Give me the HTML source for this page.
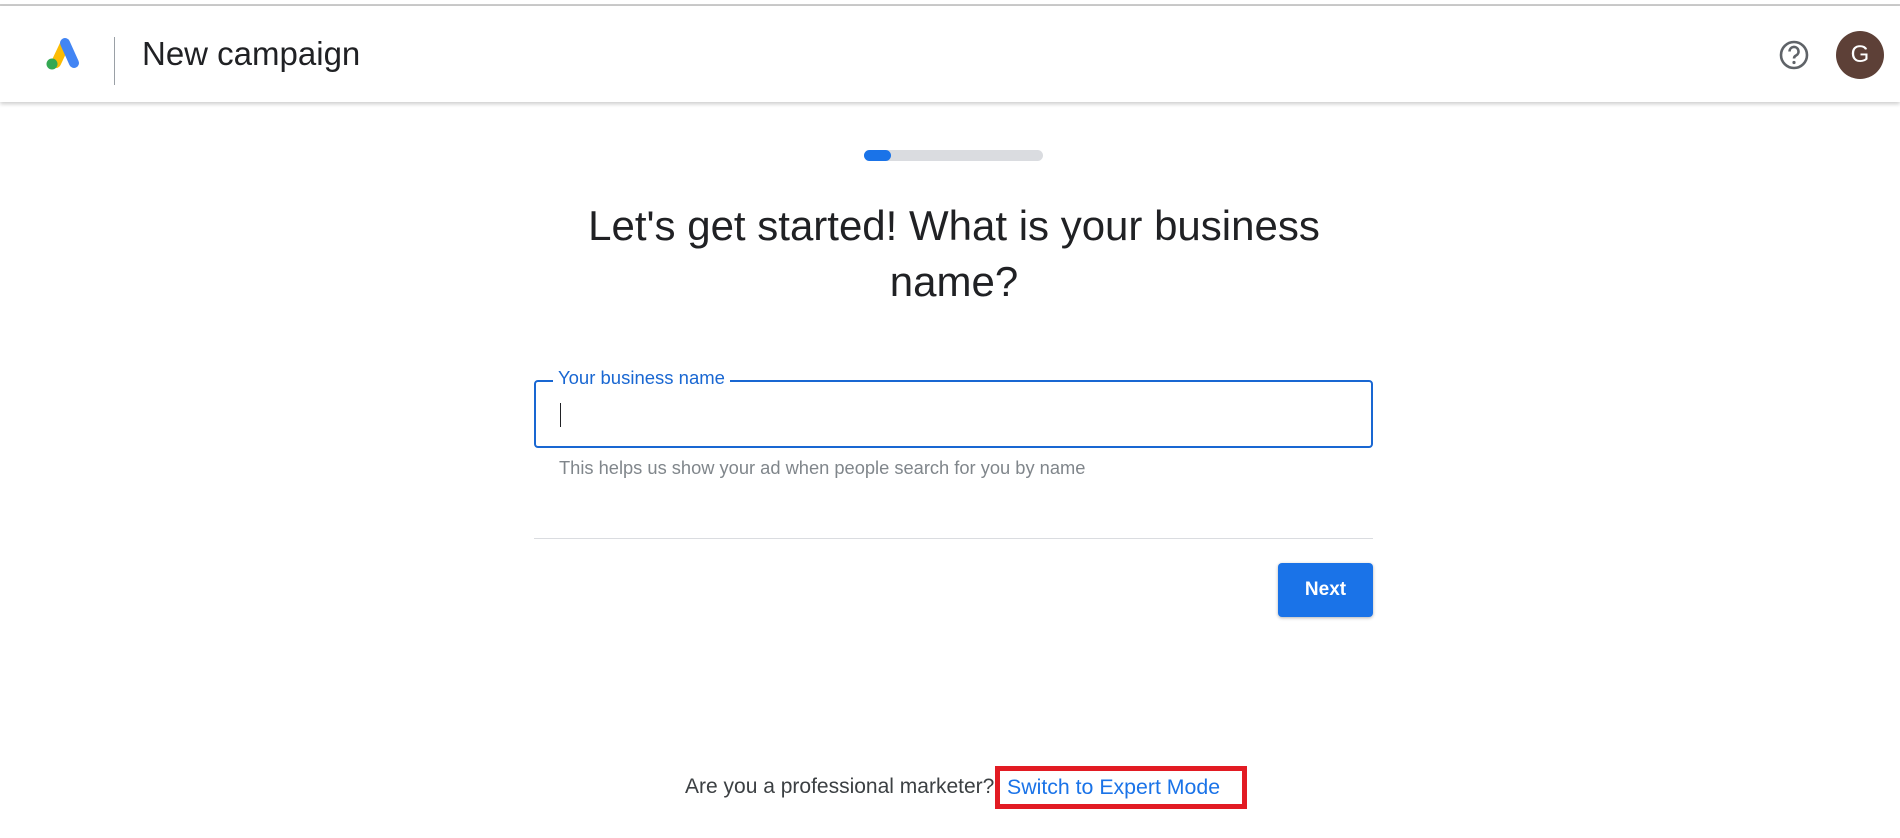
<!DOCTYPE html>
<html><head><meta charset="utf-8"><style>
*{margin:0;padding:0;box-sizing:border-box}
body{width:1900px;height:838px;background:#fff;font-family:"Liberation Sans",Arial,sans-serif;position:relative;overflow:hidden;color:#202124}
.topline{position:absolute;left:0;top:4px;width:1900px;height:2px;background:#ccc}
.header{position:absolute;left:0;top:6px;width:1900px;height:96px;background:#fff;box-shadow:0 2px 4px rgba(0,0,0,.2)}
.div{position:absolute;left:114px;top:31px;width:1px;height:48px;background:#9aa0a6}
.title{position:absolute;left:142px;top:29px;font-size:33px;color:#202124;line-height:38px}
.avatar{position:absolute;left:1836px;top:25px;width:48px;height:48px;border-radius:50%;background:#5d4037;color:#fff;font-size:24px;text-align:center;line-height:48px}
.bar{position:absolute;left:864px;top:150px;width:179px;height:11px;border-radius:6px;background:#dadce0}
.bar i{position:absolute;left:0;top:0;width:27px;height:11px;border-radius:6px;background:#1a73e8}
h1{position:absolute;left:400px;width:1108px;top:198px;text-align:center;font-weight:400;font-size:42px;line-height:56px;color:#202124}
.input{position:absolute;left:534px;top:380px;width:839px;height:68px;border:2px solid #1967d2;border-radius:4px}
.label{position:absolute;left:553px;top:367px;background:#fff;padding:0 5px;font-size:18.5px;color:#1967d2}
.cursor{position:absolute;left:560px;top:403px;width:1px;height:24px;background:#202124}
.help{position:absolute;left:559px;top:457px;font-size:18.3px;color:#80868b}
.hr{position:absolute;left:534px;top:538px;width:839px;height:1px;background:#dadce0}
.next{position:absolute;left:1278px;top:563px;width:95px;height:54px;border-radius:4px;background:#1a73e8;color:#fff;font-weight:bold;font-size:19px;text-align:center;line-height:54px;box-shadow:0 1px 3px rgba(0,0,0,.3)}
.q{position:absolute;left:685px;top:775px;font-size:21px;color:#3c4043}
.red{position:absolute;left:995px;top:766px;width:252px;height:43px;border:5px solid #e21b23}
.link{position:absolute;left:1007px;top:775px;font-size:21.3px;color:#1a73e8}
</style></head><body>
<div class="topline"></div>
<div class="header">
<svg style="position:absolute;left:43px;top:30px" width="40" height="36" viewBox="0 0 40 36">
<line x1="13" y1="27" x2="22" y2="8" stroke="#fbbc04" stroke-width="10" stroke-linecap="round"/>
<line x1="22" y1="7" x2="31" y2="27" stroke="#4285f4" stroke-width="10" stroke-linecap="round"/>
<circle cx="9" cy="28" r="5.5" fill="#34a853"/>
</svg>
<div class="div"></div>
<div class="title">New campaign</div>
<svg style="position:absolute;left:1778px;top:33px" width="32" height="32" viewBox="0 0 32 32">
<circle cx="16" cy="16" r="13" fill="none" stroke="#5f6368" stroke-width="2.6"/>
<path d="M11.5 12.5a4.5 4.5 0 1 1 6.5 4c-1.3.7-2 1.5-2 3" fill="none" stroke="#5f6368" stroke-width="2.6"/>
<circle cx="16" cy="23.5" r="1.6" fill="#5f6368"/>
</svg>
<div class="avatar">G</div>
</div>
<div class="bar"><i></i></div>
<h1>Let's get started! What is your business<br>name?</h1>
<div class="input"></div>
<div class="label">Your business name</div>
<div class="cursor"></div>
<div class="help">This helps us show your ad when people search for you by name</div>
<div class="hr"></div>
<div class="next">Next</div>
<div class="q">Are you a professional marketer?</div>
<div class="red"></div>
<div class="link">Switch to Expert Mode</div>
</body></html>
